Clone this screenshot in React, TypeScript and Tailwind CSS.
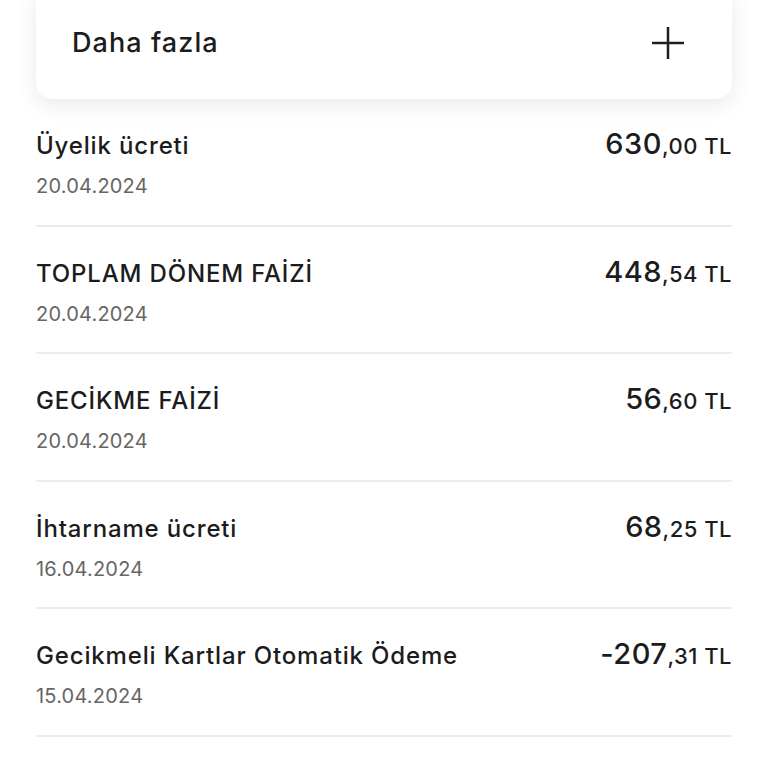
import React from 'react'

const ROWS = [
  { title: 'Üyelik ücreti', date: '20.04.2024', int: '630', dec: ',00' },
  { title: 'TOPLAM DÖNEM FAİZİ', date: '20.04.2024', int: '448', dec: ',54' },
  { title: 'GECİKME FAİZİ', date: '20.04.2024', int: '56', dec: ',60' },
  { title: 'İhtarname ücreti', date: '16.04.2024', int: '68', dec: ',25' },
  { title: 'Gecikmeli Kartlar Otomatik Ödeme', date: '15.04.2024', int: '-207', dec: ',31' },
]

function PlusIcon() {
  return (
    <svg width="36" height="36" viewBox="0 0 36 36" fill="none">
      <path d="M2 18H34M18 2V34" stroke="#1f1f1f" strokeWidth="2.5" />
    </svg>
  )
}

function Row({ title, date, int, dec }: (typeof ROWS)[number]) {
  return (
    <div className="border-b-2 border-[#ececec]">
      <div className="flex items-center justify-between pt-[33px] h-[61px]">
        <span className="text-[24px] font-medium tracking-[0.035em] text-[#1c1c1c] leading-[28px]">
          {title}
        </span>
        <span className="text-[#1c1c1c] font-medium tracking-[0.03em] leading-[28px] whitespace-nowrap">
          <span className="text-[29px]">{int}</span>
          <span className="text-[22px]">{dec} TL</span>
        </span>
      </div>
      <div className="mt-[14px] mb-[26.5px] text-[20px] tracking-[0.01em] leading-[24px] text-[#666666]">
        {date}
      </div>
    </div>
  )
}

export default function App() {
  return (
    <div
      className="w-[768px] h-[768px] overflow-hidden bg-white px-[36px]"
      style={{ fontFamily: 'Inter, "Noto Sans", sans-serif' }}
    >
      <div className="-mt-[16px] h-[115px] rounded-2xl bg-white shadow-[0_6px_22px_rgba(0,0,0,0.09)] pt-[16px]">
        <div className="flex h-[86px] items-center justify-between pl-[36px] pr-[46px]">
          <span className="text-[27px] font-medium tracking-[0.04em] text-[#1c1c1c]">Daha fazla</span>
          <PlusIcon />
        </div>
      </div>
      <div>
        {ROWS.map((r) => (
          <Row key={r.title} {...r} />
        ))}
      </div>
    </div>
  )
}
